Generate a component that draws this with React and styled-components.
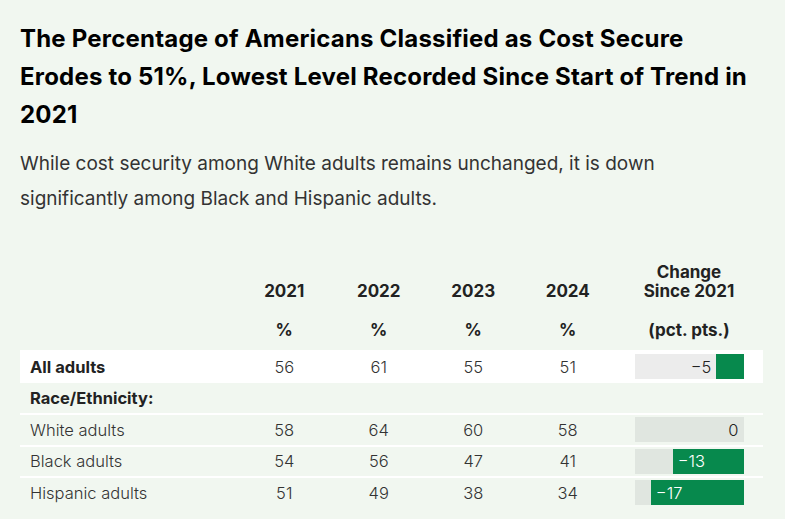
import React from "react";
import styled, { createGlobalStyle } from "styled-components";

const GlobalStyle = createGlobalStyle`
  html, body { margin: 0; padding: 0; }
  body {
    background: #f1f7f0;
    font-family: Inter, "Noto Sans", "Liberation Sans", sans-serif;
    color: #333;
  }
`;

const Page = styled.div`
  width: 785px;
  height: 519px;
  box-sizing: border-box;
  padding: 20px 22px 0 20px;
  overflow: hidden;
`;

const Title = styled.h1`
  margin: 0;
  font-size: 24px;
  line-height: 38px;
  font-weight: 700;
  color: #000;
  letter-spacing: 0.2px;
`;

const Subtitle = styled.p`
  margin: 12px 0 0;
  font-size: 19px;
  line-height: 35px;
  font-weight: 400;
  color: #333;
`;

const Table = styled.div`
  margin-top: 47px;
  width: 743px;
  display: flex;
  flex-direction: column;
`;

const COLS = "217px repeat(4, 94.5px) 148px";

const HeadRow = styled.div`
  display: grid;
  grid-template-columns: ${COLS};
  align-items: end;
  font-size: 17px;
  line-height: 19px;
  font-weight: 700;
  color: #222;
  text-align: center;
  margin-bottom: ${(p) => p.$gap || 0}px;
`;

const HeadCell = styled.div`
  text-align: center;
`;

const Row = styled.div`
  box-sizing: border-box;
  display: grid;
  grid-template-columns: ${COLS};
  align-items: center;
  height: ${(p) => p.$h}px;
  background: ${(p) => (p.$white ? "#ffffff" : "transparent")};
  border-top: ${(p) => (p.$sep ? "2px solid #ffffff" : "none")};
  font-size: 16.5px;
  color: #333;
`;

const Label = styled.div`
  padding-left: 10px;
  font-weight: ${(p) => (p.$bold ? 700 : 300)};
  color: ${(p) => (p.$bold ? "#222" : "#333")};
`;

const Value = styled.div`
  text-align: center;
  font-weight: 300;
`;

const BarCell = styled.div`
  display: flex;
  justify-content: center;
`;

const Track = styled.div`
  width: 109px;
  height: 25px;
  background: ${(p) => (p.$white ? "#ececec" : "#e0e6e0")};
  display: flex;
  justify-content: flex-end;
  align-items: center;
`;

const Fill = styled.div`
  height: 100%;
  background: #07894d;
  display: flex;
  align-items: center;
  flex-shrink: 0;
`;

const BarText = styled.span`
  font-size: 16.5px;
  font-weight: 300;
  color: ${(p) => (p.$inside ? "#ffffff" : "#222")};
  padding: ${(p) => (p.$inside ? "0 0 0 5px" : "0 5px 0 0")};
`;

const MAX = 20;

function Bar({ value, white }) {
  const w = (Math.abs(value) / MAX) * 109;
  const label = value < 0 ? `\u2212${Math.abs(value)}` : `${value}`;
  const inside = w > 40;
  return (
    <Track $white={white}>
      {!inside && <BarText>{label}</BarText>}
      {w > 0 && (
        <Fill style={{ width: `${w}px` }}>
          {inside && <BarText $inside>{label}</BarText>}
        </Fill>
      )}
    </Track>
  );
}

const rows = [
  { label: "White adults", v: [58, 64, 60, 58], c: 0 },
  { label: "Black adults", v: [54, 56, 47, 41], c: -13 },
  { label: "Hispanic adults", v: [51, 49, 38, 34], c: -17 },
];

export default function App() {
  return (
    <Page>
      <GlobalStyle />
      <Title>
        The Percentage of Americans Classified as Cost Secure Erodes to 51%,
        Lowest Level Recorded Since Start of Trend in 2021
      </Title>
      <Subtitle>
        While cost security among White adults remains unchanged, it is down
        significantly among Black and Hispanic adults.
      </Subtitle>
      <Table>
        <HeadRow $gap={20}>
          <HeadCell />
          <HeadCell>2021</HeadCell>
          <HeadCell>2022</HeadCell>
          <HeadCell>2023</HeadCell>
          <HeadCell>2024</HeadCell>
          <HeadCell>
            Change
            <br />
            Since 2021
          </HeadCell>
        </HeadRow>
        <HeadRow $gap={10}>
          <HeadCell />
          <HeadCell>%</HeadCell>
          <HeadCell>%</HeadCell>
          <HeadCell>%</HeadCell>
          <HeadCell>%</HeadCell>
          <HeadCell>(pct. pts.)</HeadCell>
        </HeadRow>
        <Row $white $h={33}>
          <Label $bold>All adults</Label>
          <Value>56</Value>
          <Value>61</Value>
          <Value>55</Value>
          <Value>51</Value>
          <BarCell>
            <Bar value={-5} white />
          </BarCell>
        </Row>
        <Row $h={30}>
          <Label $bold>Race/Ethnicity:</Label>
        </Row>
        {rows.map((r) => (
          <Row key={r.label} $sep $h={31.5}>
            <Label>{r.label}</Label>
            {r.v.map((x, i) => (
              <Value key={i}>{x}</Value>
            ))}
            <BarCell>
              <Bar value={r.c} />
            </BarCell>
          </Row>
        ))}
      </Table>
    </Page>
  );
}
